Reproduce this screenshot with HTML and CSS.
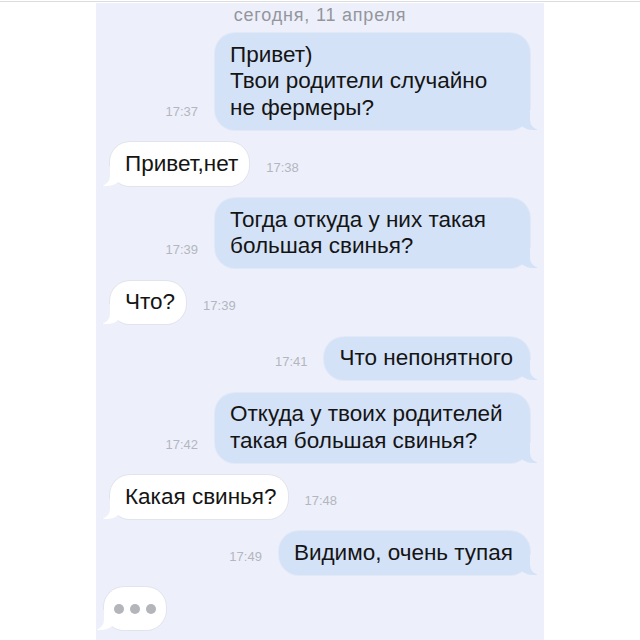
FILE: index.html
```html
<!DOCTYPE html>
<html lang="ru">
<head>
<meta charset="utf-8">
<title>Чат</title>
<link rel="stylesheet" href="styles.css">
</head>
<body>
<div class="topline"></div>
<main class="panel">
  <div class="date">сегодня, 11 апреля</div>
  <div class="row out">
    <span class="time">17:37</span>
    <div class="bubble wide">Привет)<br>Твои родители случайно<br>не фермеры?</div>
  </div>
  <div class="row in">
    <div class="bubble">Привет,нет</div>
    <span class="time">17:38</span>
  </div>
  <div class="row out">
    <span class="time">17:39</span>
    <div class="bubble wide">Тогда откуда у них такая<br>большая свинья?</div>
  </div>
  <div class="row in">
    <div class="bubble">Что?</div>
    <span class="time">17:39</span>
  </div>
  <div class="row out">
    <span class="time">17:41</span>
    <div class="bubble">Что непонятного</div>
  </div>
  <div class="row out">
    <span class="time">17:42</span>
    <div class="bubble wide">Откуда у твоих родителей<br>такая большая свинья?</div>
  </div>
  <div class="row in">
    <div class="bubble">Какая свинья?</div>
    <span class="time">17:48</span>
  </div>
  <div class="row out">
    <span class="time">17:49</span>
    <div class="bubble">Видимо, очень тупая</div>
  </div>
  <div class="row in typing-row">
    <div class="bubble typing"><span class="dot"></span><span class="dot"></span><span class="dot"></span></div>
  </div>
</main>
</body>
</html>
```
FILE: styles.css
```css
html, body {
  margin: 0;
  padding: 0;
  background: #ffffff;
  height: 640px;
  overflow: hidden;
}
body {
  font-family: "Liberation Sans", Arial, sans-serif;
  color: #141414;
}
.topline {
  height: 1px;
  margin-top: 1px;
  background: #dcdcdc;
}
.panel {
  position: relative;
  width: 448px;
  margin: 1px auto 0;
  height: 637px;
  background: #edf0fa;
  box-sizing: border-box;
  padding: 2px 14px 0;
  display: flex;
  flex-direction: column;
  gap: 12.5px;
  overflow: hidden;
  isolation: isolate;
}
.date {
  text-align: center;
  font-size: 18px;
  line-height: 20px;
  letter-spacing: 0.8px;
  color: #94969c;
  margin-bottom: -4.5px;
}
.row {
  display: flex;
  align-items: flex-end;
  gap: 17px;
}
.row.out { justify-content: flex-end; }
.row.in { justify-content: flex-start; }
.time {
  font-size: 13px;
  line-height: 14px;
  color: #b3b6bf;
  margin-bottom: 11px;
}
.bubble {
  position: relative;
  z-index: 1;
  font-size: 22.5px;
  line-height: 26.5px;
  padding: 8.5px 17px 8.5px 15px;
  border-radius: 20px;
  box-sizing: border-box;
  white-space: nowrap;
}
.out .bubble {
  background: #d4e2f8;
  box-shadow: 0 0 0 1px #e2e9f6;
}
.in .bubble {
  background: #ffffff;
  padding: 8.5px 11px 8.5px 15px;
  box-shadow: 0 0 0 1px #e1e4ec;
}
.bubble.wide { width: 315px; }
.out .bubble::before {
  content: "";
  position: absolute;
  bottom: 0;
  right: -7px;
  width: 20px;
  height: 18px;
  background: #d4e2f8;
  border-bottom-left-radius: 16px 14px;
}
.out .bubble::after {
  content: "";
  position: absolute;
  bottom: 0;
  right: -26px;
  width: 26px;
  height: 20px;
  background: #edf0fa;
  border-bottom-left-radius: 10px;
}
.in .bubble::before {
  content: "";
  position: absolute;
  bottom: 0;
  left: -7px;
  width: 20px;
  height: 18px;
  background: #ffffff;
  border-bottom-right-radius: 16px 14px;
  z-index: -1;
  box-shadow: -1px 0 0 0 #e1e4ec;
}
.in .bubble::after {
  content: "";
  position: absolute;
  bottom: 0;
  left: -26px;
  width: 26px;
  height: 20px;
  background: #edf0fa;
  border-bottom-right-radius: 10px;
}
.typing-row { margin-left: -6px; }
.in .bubble.typing {
  display: flex;
  gap: 6px;
  align-items: center;
  height: 43px;
  padding: 0 10px;
}
.dot {
  width: 10px;
  height: 10px;
  border-radius: 50%;
  background: #b3b5bb;
}
```
